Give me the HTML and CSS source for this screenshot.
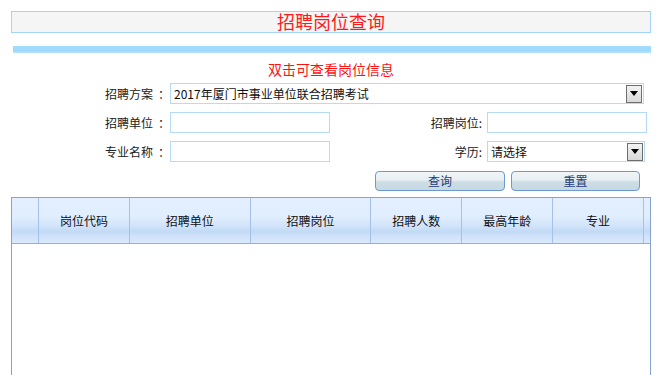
FILE: index.html
```html
<!DOCTYPE html>
<html lang="zh-CN">
<head>
<meta charset="utf-8">
<title>招聘岗位查询</title>
<link rel="stylesheet" href="styles.css">
</head>
<body>
<div class="page">
  <div class="title">招聘岗位查询</div>
  <div class="bar"></div>
  <div class="hint">双击可查看岗位信息</div>

  <form class="form">
    <label class="lbl">招聘方案<span class="colon">：</span></label>
    <div class="sel wide">
      <select><option>2017年厦门市事业单位联合招聘考试</option></select>
      <span class="arrow"><svg width="8" height="5" viewBox="0 0 8 5"><path d="M0 0h8L4 5z" fill="#000"/></svg></span>
    </div>

    <label class="lbl">招聘单位<span class="colon">：</span></label>
    <input class="inp" type="text">
    <label class="lbl right">招聘岗位:</label>
    <input class="inp" type="text">

    <label class="lbl">专业名称<span class="colon">：</span></label>
    <input class="inp" type="text">
    <label class="lbl right">学历:</label>
    <div class="sel edu">
      <select><option>请选择</option></select>
      <span class="arrow"><svg width="8" height="5" viewBox="0 0 8 5"><path d="M0 0h8L4 5z" fill="#000"/></svg></span>
    </div>
  </form>

  <div class="buttons">
    <button class="btn" type="button">查询</button>
    <button class="btn" type="button">重置</button>
  </div>

  <div class="grid">
    <div class="head">
      <div class="th c0"></div>
      <div class="th c1">岗位代码</div>
      <div class="th c2">招聘单位</div>
      <div class="th c2">招聘岗位</div>
      <div class="th c1">招聘人数</div>
      <div class="th c1">最高年龄</div>
      <div class="th c1">专业</div>
      <div class="th c7"></div>
    </div>
    <div class="body"></div>
  </div>
</div>
</body>
</html>
```

FILE: styles.css
```css
* { box-sizing: border-box; }
html, body { margin: 0; padding: 0; background: #fff; }
body {
  font-family: "Noto Sans CJK SC", "Noto Sans", sans-serif;
  font-size: 12px;
  color: #222;
  overflow: hidden;
}
.page {
  width: 651px;
  padding: 11px 0 0 11px;
}
.title {
  height: 22px;
  border: 1px solid #a3d5f7;
  background: #f5f5f5;
  color: #ff1a1a;
  font-size: 18px;
  line-height: 19px;
  text-align: center;
}
.bar {
  margin: 13px 0 0 2px;
  height: 7px;
  background: linear-gradient(to bottom, #a3dcfc 0%, #9ed9fc 70%, #b9e4fb 100%);
}
.hint {
  margin-top: 6px;
  height: 20px;
  line-height: 20px;
  text-align: center;
  color: #ff1111;
  font-size: 14px;
}
.form {
  margin: 4px 0 0 94px;
  display: grid;
  grid-template-columns: 65px 160px 157px 160px;
  grid-auto-rows: 21px;
  row-gap: 8px;
  align-items: center;
}
.lbl {
  font-size: 12px;
  line-height: 21px;
  color: #222;
  white-space: nowrap;
}
.colon {
  display: inline-block;
  margin-left: 5px;
}
.lbl.right {
  text-align: right;
  padding-right: 5px;
}
.inp {
  width: 160px;
  height: 21px;
  border: 1px solid #b6dbf6;
  background: #fff;
  margin: 0;
  padding: 0 3px;
  font: inherit;
}
.sel {
  display: flex;
  align-items: center;
  height: 21px;
  border: 1px solid #b6dbf6;
  background: #fff;
  padding: 0 1px 0 0;
}
.sel.wide {
  grid-column: 2 / 5;
  width: 474px;
}
.sel.edu {
  width: 158px;
}
.sel select {
  flex: 1;
  min-width: 0;
  height: 19px;
  border: 0;
  outline: 0;
  background: transparent;
  -webkit-appearance: none;
  appearance: none;
  font-family: "Noto Sans CJK SC", "Noto Sans", sans-serif;
  font-size: 12px;
  color: #111;
  padding: 0 0 0 3px;
  line-height: 19px;
}
.arrow {
  width: 16px;
  height: 18px;
  border: 1px solid #6e6e6e;
  background: linear-gradient(to bottom, #f3f3f3, #d9d9d9);
  display: flex;
  align-items: center;
  justify-content: center;
}
.arrow svg { display: block; }
.buttons {
  margin: 9px 0 0 364px;
  display: flex;
  gap: 6px;
}
.btn {
  width: 130px;
  height: 20px;
  margin: 0;
  padding: 0;
  border: 1px solid #6b9ccb;
  border-radius: 4px;
  background: linear-gradient(to bottom, #f1f5f7 0%, #e6eef2 45%, #cddde5 55%, #c7d8e1 100%);
  color: #1e3c78;
  font-family: "Noto Sans CJK SC", "Noto Sans", sans-serif;
  font-size: 12px;
  line-height: 18px;
}
.btn + .btn { width: 129px; }
.grid {
  margin-top: 6px;
  width: 640px;
  border-left: 1px solid #86a3d0;
  border-right: 1px solid #86a3d0;
  border-top: 1px solid #86a3d0;
}
.head {
  display: flex;
  height: 46px;
  border-bottom: 1px solid #8fb0dc;
  background: linear-gradient(to bottom, #e3effe 0%, #e1eefd 40%, #d3e5fa 60%, #c2daf5 75%, #cfe2f9 85%, #dbeafc 100%);
}
.th {
  border-right: 1px solid #a3c1ea;
  display: flex;
  align-items: center;
  justify-content: center;
  font-size: 12px;
  color: #111;
  padding-bottom: 1px;
}
.c0 { width: 27px; }
.c1 { width: 91px; }
.c2 { width: 121px; }
.c7 { width: 6px; border-right: 0; }
.body {
  height: 140px;
  background: #fff;
}
```
